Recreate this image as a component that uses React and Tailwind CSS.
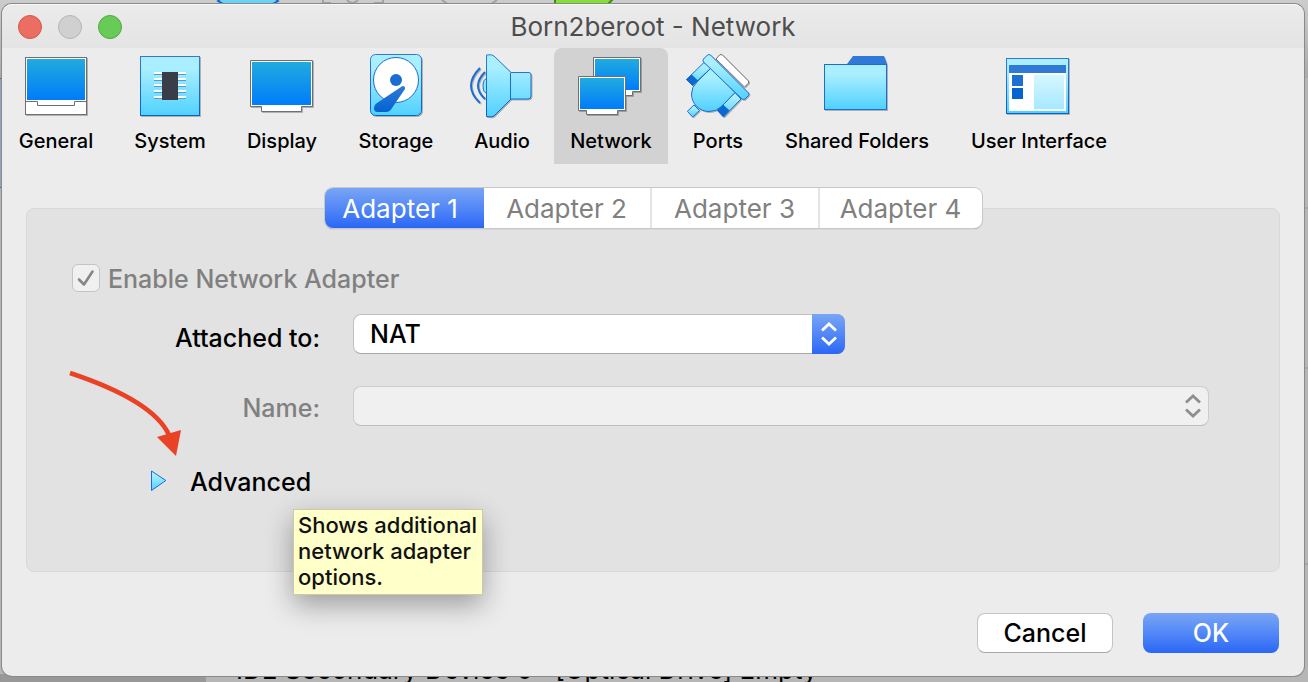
import React from "react";

function Defs() {
  return (
    <svg width="0" height="0" className="absolute" aria-hidden="true">
      <defs>
        <linearGradient id="cyan" x1="0" y1="0" x2="0" y2="1">
          <stop offset="0.2" stopColor="#aaefff" />
          <stop offset="1" stopColor="#50d1ff" />
        </linearGradient>
        <linearGradient id="screen" x1="0" y1="0" x2="0" y2="1">
          <stop offset="0" stopColor="#21abde" />
          <stop offset="1" stopColor="#007cfa" />
        </linearGradient>
        <linearGradient id="deep" x1="0" y1="0" x2="0" y2="1">
          <stop offset="0" stopColor="#3079d6" />
          <stop offset="1" stopColor="#0363d0" />
        </linearGradient>
        <linearGradient id="pane" x1="0" y1="0" x2="0" y2="1">
          <stop offset="0" stopColor="#d5f7ff" />
          <stop offset="1" stopColor="#a7e8ff" />
        </linearGradient>
      </defs>
    </svg>
  );
}

function Icon({ children, viewBox = "0 0 64 64" }) {
  return (
    <svg width="64" height="64" viewBox={viewBox} aria-hidden="true" className="shrink-0 overflow-visible drop-shadow-[1px_1px_0_#00000040]">
      {children}
    </svg>
  );
}

const GeneralIcon = () => (
  <Icon>
    <g fill="#fff" stroke="#6f6f6f">
      <rect x="1.5" y="3.5" width="61" height="57" />
      <path d="M1.5 47.5H13.5V51.5H50.5V47.5H62.5" fill="none" />
    </g>
    <rect x="3" y="5" width="58" height="41" fill="url(#screen)" />
  </Icon>
);

const SystemIcon = () => (
  <Icon>
    <rect x="2.5" y="2.5" width="59" height="59" fill="url(#cyan)" stroke="url(#deep)" />
    {[18, 24, 30, 36, 42].map((y) => (
      <g key={y}>
        <rect x="16" y={y} width="32" height="2" fill="#fff" />
        <rect x="16" y={y + 2} width="32" height="1" fill="#4b9cdb" />
      </g>
    ))}
    <rect x="24" y="18" width="16" height="28" fill="#393d48" />
  </Icon>
);

const DisplayIcon = () => (
  <Icon>
    <path d="M.5 6.5H62.5V52.5H51.5V57.5H11.5V52.5H.5Z" fill="#fff" stroke="#6f6f6f" />
    <rect x="2" y="8" width="59" height="43" fill="url(#screen)" />
  </Icon>
);

const StorageIcon = () => (
  <Icon>
    <rect x="6.5" y=".5" width="51" height="61" rx="5" fill="url(#cyan)" stroke="url(#deep)" />
    <circle cx="32" cy="26" r="22.5" fill="#fff" stroke="#1b6cd3" />
    <circle cx="32" cy="26" r="6" fill="#1b6cd3" />
    <path d="M38.500 32Q41.500 32 41 35L28 54Q26 58 22 58H14Q10 58 10 54.500Q10 51 13 49Z" fill="url(#deep)" />
  </Icon>
);

const AudioIcon = () => (
  <Icon viewBox="1 0 64 64">
    <g stroke="#1b6cd3" fill="none">
      <path d="M11 14Q-7 32 11 49" strokeWidth="2" />
      <path d="M16 18Q2 32 16 45" strokeWidth="2" />
      <path d="M18 24.500Q14 25 14 32T18 39" fill="#8fe4ff" />
    </g>
    <path d="M17.500 1Q23 0 25 2L42 18.500H60Q62 18.500 62 21V42Q62 45 59 45H42L25 62Q23 63.500 17.500 62.500Z" fill="url(#cyan)" stroke="url(#deep)" />
    <path d="M41.500 19V45" stroke="#1b6cd3" />
  </Icon>
);

const NetworkIcon = () => (
  <Icon viewBox="2 0 64 64">
    <path d="M16.500 3.500H63.500V37.500H55.500V41.500H24.500V37.500H16.500Z" fill="#fff" stroke="#6f6f6f" />
    <rect x="18" y="5" width="44" height="31" fill="url(#screen)" />
    <path d="M1.500 22.500H48.500V56.500H40.500V60.500H9.500V56.500H1.500Z" fill="#fff" stroke="#6f6f6f" />
    <rect x="3" y="24" width="44" height="31" fill="url(#screen)" />
  </Icon>
);

const PortsIcon = () => (
  <Icon>
    <path d="M30 5L33.500 1Q35 0 36.500 1L62 26.500Q63.500 28 62 29.500L58.500 33Z" fill="#fff" stroke="#6f6f6f" />
    <g stroke="#1b6cd3" fill="url(#cyan)" strokeLinejoin="round">
      <path d="M18 8.500L.5 25.500L6.500 31.500L25 14Z" />
      <path d="M55 45L37.500 63L31.500 56.500L49 38.500Z" />
      <path d="M8 51L1.300 57.300L6.700 63L13.500 56.500Z" />
      <path d="M25 14L11 28Q5.500 33 5.500 40A17.500 17.500 0 0 0 23 57.500Q30 57.500 35 53L49 38.500Z" />
      <path d="M17.500 5L21.500 1Q23 0 24.500 1L62.500 39Q63.500 40 62.500 41.500L59 45Q57.500 46 56 45L17.500 8Q16.500 6.500 17.500 5Z" />
    </g>
    <path d="M0 25.500L5.500 20.500L12 26.500L6.700 31.800ZM37 50.500L43.500 56.500L37.500 63L31.200 56.500Z" fill="#0d68d2" />
  </Icon>
);

const FolderIcon = () => (
  <Icon viewBox="1 0 64 64">
    <path d="M23 10L29 2H60L63 10Z" fill="#3079d6" />
    <rect x=".5" y="10.500" width="62" height="45" fill="url(#cyan)" stroke="#1b6cd3" />
  </Icon>
);

const InterfaceIcon = () => (
  <Icon viewBox="1 0 64 64">
    <rect x=".5" y="4.500" width="62" height="55" fill="url(#cyan)" stroke="url(#deep)" />
    <rect x="3" y="11" width="57" height="46" fill="#fff" />
    <rect x="3" y="11" width="57" height="8" fill="#3079d6" />
    <rect x="6" y="21" width="11" height="11" fill="#1d6fd4" />
    <rect x="6" y="34" width="11" height="11" fill="#0564d1" />
    <rect x="28" y="21" width="30" height="34" fill="url(#pane)" />
  </Icon>
);

const sections = [
  { name: "General", icon: GeneralIcon, width: "w-[108px]" },
  { name: "System", icon: SystemIcon, width: "w-[104px]" },
  { name: "Display", icon: DisplayIcon, width: "w-[104px]" },
  { name: "Storage", icon: StorageIcon, width: "w-[108px]" },
  { name: "Audio", icon: AudioIcon, width: "w-[88px]" },
  { name: "Network", icon: NetworkIcon, width: "w-[114px]" },
  { name: "Ports", icon: PortsIcon, width: "w-[84px]" },
  { name: "Shared Folders", icon: FolderIcon, width: "w-[178px]" },
  { name: "User Interface", icon: InterfaceIcon, width: "w-[170px]" },
];

const tabs = ["Adapter 1", "Adapter 2", "Adapter 3", "Adapter 4"];

function Chevrons() {
  return (
    <svg width="16" height="24" viewBox="0 0 16 24" fill="none" stroke="currentColor" strokeWidth="2.8" aria-hidden="true">
      <path d="M1 8.500L8 2L15 8.500M1 15.500L8 22L15 15.500" />
    </svg>
  );
}

function Backdrop() {
  return (
    <div className="absolute inset-0" aria-hidden="true">
      <div className="absolute inset-x-0 top-0 h-[78px] bg-linear-to-b from-[#cccccc] to-[#aaaaaa]" />
      <div className="absolute left-0 top-[78px] h-[110px] w-1 border-y border-[#4f6488] bg-[#8ea5c8]" />
      <div className="absolute bottom-0 left-0 h-2 w-[206px] bg-[#989898]" />
      <div className="absolute right-0 top-[207px] h-[162px] w-1 border-y-2 border-[#a5a5a5]" />
      <div className="absolute right-0 top-[563px] h-0.5 w-1 bg-[#a5a5a5]" />
      <svg width="440" height="8" viewBox="0 0 440 8" className="absolute left-[200px] top-0">
        <path d="M20 -1L18 1Q24 5 30 5H66Q72 5 78 1L76 -1Z" fill="#6bd3f5" stroke="#1268cc" strokeWidth="2" />
        <path d="M123 0V3H131M147 0Q152 6 158 0M174 3H183V0M242 0L249 5M290 5L297 0" fill="none" stroke="#a2a2a2" strokeWidth="2" />
        <path d="M355 -1V8H404L413 -1Z" fill="#86df35" stroke="#3b8a14" strokeWidth="2" />
      </svg>
      <p className="absolute bottom-0 left-[236px] whitespace-pre text-[26px] leading-6 text-black">
        IDE Secondary Device 0:  [Optical Drive] Empty
      </p>
    </div>
  );
}

export default function App() {
  return (
    <div className="relative flex min-h-screen overflow-hidden bg-[#b6b6b6] pt-1 pr-1 pb-1.5 pl-0.5 font-['Inter',sans-serif] text-[25px] leading-8 text-black">
      <Defs />
      <Backdrop />
      <main className="relative flex grow flex-col rounded-[10px] bg-[#ececec] shadow-[0_0_0_1px_#8a8a8a]">
        <header className="grid h-11 grid-cols-[1fr_auto_1fr] items-center rounded-t-[10px] border-t border-[#f8f8f8] bg-linear-to-b from-[#ebebeb] to-[#e4e4e4] px-4">
          <div className="flex gap-4">
            <button aria-label="Close" className="size-6 rounded-full border border-[#d5554b] bg-[#ec6d62]" />
            <button aria-label="Minimize" className="size-6 rounded-full border border-[#b5b5b5] bg-[#d0d0d0]" />
            <button aria-label="Zoom" className="size-6 rounded-full border border-[#51a73e] bg-[#69cb57]" />
          </div>
          <h1 className="text-[26px] text-[#4d4d4d]">Born2beroot - Network</h1>
        </header>

        <nav className="flex gap-2">
          {sections.map(({ name, icon: Glyph, width }) => (
            <button
              key={name}
              className={`${width} flex h-[116px] flex-col items-center rounded-t-lg pt-1.5 text-xl leading-6 font-medium whitespace-nowrap ${
                name === "Network" ? "bg-[#d2d2d2]" : ""
              }`}
            >
              <Glyph />
              <span className="pt-[11px]">{name}</span>
            </button>
          ))}
        </nav>

        <div className="flex grow flex-col px-6 pt-6 pb-[23px]">
          <div role="tablist" className="relative z-10 -mb-5 flex h-10 self-center rounded-lg bg-white text-[26px] shadow-[0_0_0_1px_#c8c8c8,0_1px_1px_#888888]">
            {tabs.map((tab, i) => (
              <button
                key={tab}
                role="tab"
                aria-selected={i === 0}
                className={
                  i === 0
                    ? "w-[159px] rounded-l-lg bg-linear-to-b from-[#7aa5f5] to-[#2b66f6] pt-0.5 pr-2 text-white"
                    : i === 3
                      ? "w-[164px] border-l-2 border-[#e4e4e4] pt-0.5 text-[#808080]"
                      : i === 1
                        ? "w-[166px] pt-0.5 text-[#808080]"
                        : "w-[168px] border-l-2 border-[#e4e4e4] pt-0.5 text-[#808080]"
                }
              >
                {tab}
              </button>
            ))}
          </div>

          <section className="relative h-[364px] rounded-lg border border-[#d8d8d8] bg-[#e2e2e2] pt-[55px] pr-[70px] pl-[45px]">
            <label className="flex h-7 items-center gap-2 font-medium text-[#808080]">
              <span className="relative flex size-7">
                <input type="checkbox" checked disabled readOnly className="size-7 appearance-none rounded-md border border-[#c4c4c4] bg-[#f0f0f0]" />
                <svg width="28" height="28" viewBox="0 0 28 28" className="absolute inset-0" fill="none" stroke="#868686" strokeWidth="2.6" strokeLinecap="round" strokeLinejoin="round" aria-hidden="true">
                  <path d="M7 15.500L12 20.500L20.500 7.500" />
                </svg>
              </span>
              <span className="pt-0.5">Enable Network Adapter</span>
            </label>

            <div className="grid grid-cols-[248px_1fr] items-center gap-x-[33px] gap-y-8 pt-[22px] font-medium">
              <label htmlFor="attached" className="pt-2 text-right">Attached to:</label>
              <div className="relative w-[492px]">
                <select id="attached" className="h-10 w-full appearance-none rounded-lg border border-[#c0c0c0] border-b-[#a8a8a8] bg-white pl-4">
                  <option>NAT</option>
                </select>
                <span className="pointer-events-none absolute inset-y-0 right-0 flex w-[33px] items-center justify-center rounded-r-lg bg-linear-to-b from-[#7aa5f5] to-[#2b66f6] text-white">
                  <Chevrons />
                </span>
              </div>
              <label htmlFor="name" className="pt-1 text-right text-[#808080]">Name:</label>
              <div className="relative">
                <select id="name" disabled className="h-10 w-full appearance-none rounded-lg border border-[#cdcdcd] border-b-[#bdbdbd] bg-[#f0f0f0] opacity-100" />
                <span className="pointer-events-none absolute inset-y-0 right-0 flex w-[33px] items-center justify-center text-[#8e8e8e]">
                  <Chevrons />
                </span>
              </div>
            </div>

            <button className="mt-[38px] ml-[78px] flex items-center gap-[23px] font-medium">
              <svg width="17" height="22" viewBox="0 0 17 22" aria-hidden="true">
                <path d="M1.500 1L15.800 10.500L1.500 20.500Z" fill="url(#cyan)" stroke="#1b6cd3" strokeLinejoin="round" />
              </svg>
              <span className="pt-0.5">Advanced</span>
            </button>

            <svg width="120" height="90" viewBox="0 0 120 90" className="absolute left-[38px] top-[160px]" aria-hidden="true">
              <path d="M5 4C38 15 90 35 104 66" fill="none" stroke="#e94225" strokeWidth="4.5" />
              <path d="M92 68L116 61L111 87Z" fill="#e94225" />
            </svg>

            <div role="tooltip" className="absolute left-[266px] top-[300px] w-[190px] border border-[#c9c9b0] bg-[#ffffca] px-1 pt-0.5 pb-1 text-[22px] leading-[26px] font-medium text-[#111111] shadow-[0_10px_26px_#00000055]">
              Shows additional network adapter options.
            </div>
          </section>

          <footer className="mt-auto flex justify-end gap-[30px] pr-px font-medium">
            <button className="h-10 w-[136px] rounded-lg border border-[#c4c4c4] border-b-[#a8a8a8] bg-white">Cancel</button>
            <button className="h-10 w-[136px] rounded-lg bg-linear-to-b from-[#7aa5f5] to-[#2b66f6] text-white">OK</button>
          </footer>
        </div>
      </main>
    </div>
  );
}
